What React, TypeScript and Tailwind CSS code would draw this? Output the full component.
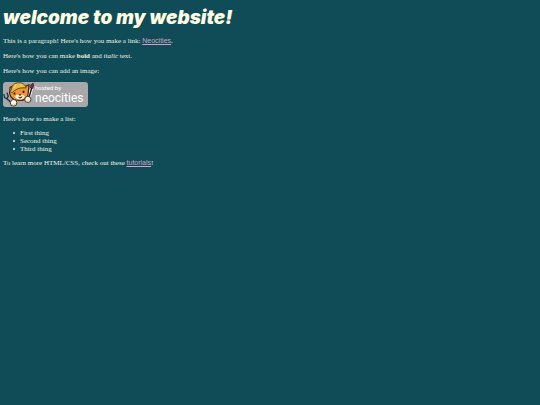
import React from 'react';

const things = ['First thing', 'Second thing', 'Third thing'];

const NeocitiesButton: React.FC = () => (
  <div className="flex h-[25px] w-[85px] items-center gap-[1px] rounded-[3px] bg-[#a8a8aa]">
    <svg className="h-[26px] w-[31px] shrink-0" viewBox="0 0 31 26" aria-hidden="true">
      {/* paintbrush */}
      <path d="m25.5 17 3.2-11" stroke="#fff" strokeWidth="3" />
      <path d="m25.5 17 3.2-11" stroke="#33202a" strokeWidth="1.5" />
      <path d="M27.4 6C26.8 4 28.4 1.8 30.2 1.4c.6 1.8.1 3.9-.8 5.2z" fill="#9b2937" stroke="#2b1b22" strokeWidth=".8" />
      {/* fork */}
      <path d="m3 16 5.6 5M.8 12.2l.8 3.4 2.4 1.2M4 10.6l1.2 3.6-1.2 2.6" stroke="#1c3540" strokeWidth="1.4" fill="none" />
      {/* head */}
      <path d="M6.6 11.5 7 5.4 10 4 22 4.6 26 2.6 25 13c-1.2 4-4.6 5.8-9 5.4-5-.3-8.6-2.9-9.4-6.9z" fill="#ee9636" stroke="#3a2014" strokeWidth="1.1" />
      <path d="M12 14.6c1.4-2.2 3.4-2.6 5-1.3 1.8-1 3.8-.4 4.8 1.3-.8 2.2-2.8 3-5 2.9-2.4-.1-4.1-1-4.8-2.9z" fill="#fff4dd" />
      <path d="M11.5 10.5v2M20.5 8.8v2.2" stroke="#2b1b14" strokeWidth="1.7" />
      <path d="m15.8 12.6 2.2-.2-1 1.4zM15.5 15c1.4.5 2.6.3 3.6-.4-.2 1.6-2.6 2.3-3.6.4z" fill="#5b1e1b" stroke="#5b1e1b" strokeWidth=".5" />
      {/* hard hat */}
      <path d="M8.6 7.6C8.6 3.2 11.8.7 15.6.8c4.4 0 7 2 7.4 5.2-4.4-.6-8.6 0-13.6 4.2-2 1-3.2-.8-.8-2.6z" fill="#eabb3e" stroke="#51401e" strokeWidth=".9" />
      <path d="M13 2.2c-1 1.4-1.2 2.8-1 4.2M17.6 1.8c.6 1 1 2 1 3" stroke="#f9df86" strokeWidth=".9" fill="none" />
      {/* paws */}
      <circle cx="10.6" cy="20.8" r="3.3" fill="#fff8e8" stroke="#33241c" strokeWidth=".9" />
      <circle cx="24.8" cy="17.4" r="3.1" fill="#fff8e8" stroke="#33241c" strokeWidth=".9" />
      <path d="M9.8 22v1.6M11.6 22v1.6M24.2 18.4V20M26 18.4V20" stroke="#e0a66a" strokeWidth=".8" />
    </svg>
    <div className="flex flex-col font-['Roboto',sans-serif] text-white">
      <span className="text-[6px] leading-[7px]">hosted by</span>
      <span className="text-[12px] leading-[14px]">neocities</span>
    </div>
  </div>
);

const TextLink: React.FC<{ href: string; children: React.ReactNode }> = ({ href, children }) => (
  <a href={href} className="font-['Liberation_Sans',Arial,sans-serif] text-[#d0a3c4] underline">
    {children}
  </a>
);

const App: React.FC = () => {
  return (
    <main className="min-h-screen bg-[#104c58] px-[3px] pt-[7px] font-['Liberation_Serif','Times_New_Roman',serif] text-[7px] leading-[8px] text-[#eef4e2]">
      <h1 className="mb-[8px] font-['Inter',sans-serif] text-[19px] font-black italic leading-[22px] text-[#fffde2]">
        welcome to my website!
      </h1>
      <section className="mb-[8px] flex flex-col gap-[7px]">
        <p>
          This is a paragraph! Here's how you make a link: <TextLink href="#neocities">Neocities</TextLink>.
        </p>
        <p>
          Here's how you can make <strong>bold</strong> and <em>italic</em> text.
        </p>
        <p>Here's how you can add an image:</p>
        <NeocitiesButton />
      </section>
      <section className="flex flex-col gap-[6px]">
        <p>Here's how to make a list:</p>
        <ul className="pl-[10px]">
          {things.map((thing) => (
            <li
              key={thing}
              className="flex items-center gap-[5px] before:size-[2px] before:rounded-full before:bg-current before:content-['']"
            >
              {thing}
            </li>
          ))}
        </ul>
        <p>
          To learn more HTML/CSS, check out these <TextLink href="#tutorials">tutorials</TextLink>!
        </p>
      </section>
    </main>
  );
};

export default App;
